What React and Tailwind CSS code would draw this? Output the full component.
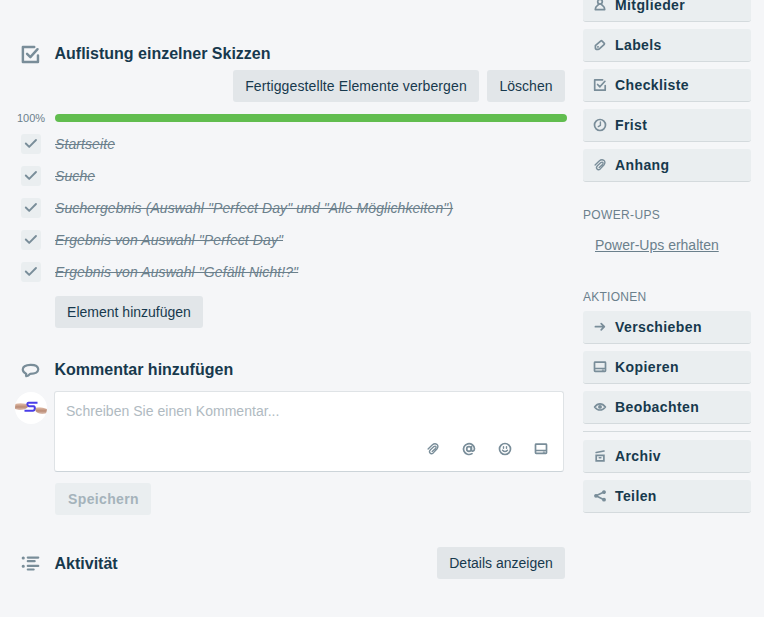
import React from 'react';

function Svg({ size = 16, className = '', children }) {
  return (
    <svg
      width={size}
      height={size}
      viewBox="0 0 16 16"
      fill="none"
      stroke="currentColor"
      strokeWidth="1.7"
      strokeLinecap="round"
      strokeLinejoin="round"
      className={'block shrink-0 text-[#798d99] ' + className}
    >
      {children}
    </svg>
  );
}

const icons = {
  member: (
    <>
      <circle cx="8" cy="4.8" r="2.3" />
      <path d="M6.6 7.2C6.4 8.6 3.3 8.6 3.3 12.6H12.7C12.7 8.6 9.6 8.6 9.4 7.2" />
    </>
  ),
  label: (
    <>
      <path d="M3.6 8.3L8.9 3.8Q9.4 3.4 9.9 3.8L12.3 6.3Q12.7 6.8 12.3 7.3L7.3 11.8Q6.8 12.3 6.1 12.3H4.3Q3.4 12.2 3.4 11.3V9.4Q3.2 8.7 3.6 8.3Z" />
      <circle cx="5.8" cy="9.9" r=".5" strokeWidth="1" />
    </>
  ),
  checklist: (
    <>
      <path d="M10.6 2.8H2.7V13.2H13.2V8.6" />
      <path d="M5.6 7.5L7.9 9.8L12.9 4.3" />
    </>
  ),
  clock: (
    <>
      <circle cx="8" cy="8" r="5.5" />
      <path d="M8.4 4.9V8.4L6.3 9.6" strokeWidth="1.4" />
    </>
  ),
  clip: (
    <path
      d="M3.1 8L7.2 4Q9.6 2 11.8 3.3Q14 5.3 11.9 8L8.3 11.9Q6.4 13.5 5 12.1Q3.7 10.7 5.4 8.8L8.9 5.6Q10.2 4.7 10.9 5.5Q11.5 6.3 10.5 7.4L7.2 10.5"
      strokeWidth="1.35"
    />
  ),
  arrow: <path d="M3.4 7.7H12.3M9.2 4.6L12.3 7.7L9.2 10.8" />,
  card: (
    <>
      <rect x="2.5" y="3.2" width="11" height="9.2" rx=".6" />
      <path d="M2.8 9.5H13.2" strokeWidth="1.3" />
      <path d="M10.4 11.1H11.4" strokeWidth="1.4" />
    </>
  ),
  eye: (
    <>
      <path d="M2.6 7.9Q5 4.8 8 4.8T13.4 7.9Q11 11 8 11T2.6 7.9Z" />
      <circle cx="8" cy="7.9" r="1.1" fill="currentColor" />
    </>
  ),
  archive: (
    <>
      <path d="M4.2 4.5L12 3" />
      <path d="M4.2 7.3V12.9H11.9V7.3Z" strokeLinejoin="miter" />
      <path d="M7.2 9.8H8.9" strokeWidth="1.4" />
    </>
  ),
  share: (
    <>
      <path d="M12 4.1L4 7.8L12 11.7" />
      <circle cx="4" cy="7.8" r="1.3" fill="currentColor" strokeWidth="1.2" />
      <circle cx="12" cy="4.1" r="1.3" fill="currentColor" strokeWidth="1.2" />
      <circle cx="12" cy="11.7" r="1.3" fill="currentColor" strokeWidth="1.2" />
    </>
  ),
  mention: (
    <>
      <circle cx="8" cy="8" r="2.3" />
      <path d="M10.4 5.5V8.8Q10.5 10.3 11.8 10.1Q13.5 9.7 13.5 7.8A5.5 5.4 0 1 0 11 12.6" />
    </>
  ),
  emoji: (
    <>
      <circle cx="8" cy="8" r="5.5" />
      <path d="M6.5 5.6V7.2M9.5 5.6V7.2M5.5 9.2Q8 11.8 10.5 9.2" strokeWidth="1.4" />
    </>
  ),
  comment: (
    <path d="M5 12Q4.6 11.5 5 10.2Q2.6 9.4 2.6 7.2Q2.9 4.2 8 4.1T13.4 7.1Q13.2 10.3 7.7 10.3Q6.6 11.7 5 12Z" strokeWidth="1.5" />
  ),
  activity: (
    <>
      <path d="M6.1 3.9H13.4M6.1 6.4H10.9M6.1 9.7H13.4M6.1 12.2H10.2" strokeWidth="1.5" />
      <path d="M2.9 4.2H3M2.9 9.9H3" strokeWidth="2.1" />
    </>
  ),
};

function SideButton({ icon, children }) {
  return (
    <div className="flex h-[33px] shrink-0 items-center rounded-[3px] border-b border-[#d4dadd] bg-[#eaeef0] pl-[9px] text-[14px] font-bold leading-5 tracking-[0.4px]">
      <Svg>{icons[icon]}</Svg>
      <span className="ml-[7px]">{children}</span>
    </div>
  );
}

function Button({ className = '', children }) {
  return (
    <div className={'flex h-8 shrink-0 items-center justify-center rounded-[3px] bg-[#e2e6e9] ' + className}>
      {children}
    </div>
  );
}

function SectionTitle({ icon, children }) {
  return (
    <div className="flex h-6 items-center">
      <Svg size={23} className="ml-[19px]">{icons[icon]}</Svg>
      <h3 className="ml-[12.5px] text-[16px] font-bold leading-5">{children}</h3>
    </div>
  );
}

const items = [
  'Startseite',
  'Suche',
  'Suchergebnis (Auswahl "Perfect Day" und "Alle Möglichkeiten")',
  'Ergebnis von Auswahl "Perfect Day"',
  'Ergebnis von Auswahl "Gefällt Nicht!?"',
];

function Avatar() {
  return (
    <svg width="32" height="32" viewBox="0 0 32 32" className="ml-[15px] mt-px block shrink-0">
      <defs>
        <clipPath id="round"><circle cx="16" cy="16" r="16" /></clipPath>
        <linearGradient id="skin" x1="0" y1="0" x2="0" y2="1">
          <stop offset="0" stopColor="#e5c2ad" />
          <stop offset=".55" stopColor="#b98a74" />
          <stop offset="1" stopColor="#e0c5b8" />
        </linearGradient>
      </defs>
      <g clipPath="url(#round)">
        <rect width="32" height="32" fill="#fff" />
        <path d="M0 12Q5 10.5 12 12L13 15Q10 18.5 4 18L0 17Z" fill="url(#skin)" />
        <path d="M20 16Q25 14 32 17V21Q27 23 23 21Q20 20 20 16Z" fill="url(#skin)" />
        <path d="M22.5 10.8H13.5Q12.2 10.8 12.4 12.4T14 14.3H18.5Q20 14.5 19.8 16.5T18 18.8H9.5" fill="none" stroke="#493de9" strokeWidth="2" />
      </g>
    </svg>
  );
}

export default function App() {
  return (
    <div className="flex h-[617px] w-[764px] overflow-hidden bg-[#f5f6f8] font-['Liberation_Sans',Arial,sans-serif] text-[14px] leading-5 text-[#17394d]">
      <main className="flex w-[583px] shrink-0 flex-col pt-[42px]">
        <SectionTitle icon="checklist">Auflistung einzelner Skizzen</SectionTitle>
        <div className="mt-1 flex justify-end gap-2 pr-[18px]">
          <Button className="w-[246px] tracking-[0.11px]">Fertiggestellte Elemente verbergen</Button>
          <Button className="w-[78px]">Löschen</Button>
        </div>
        <div className="mt-3 flex h-2 items-center">
          <span className="w-[55px] pl-[17px] text-[11px] leading-3 text-[#6b808c]">100%</span>
          <div className="h-2 w-[512px] rounded-full bg-[#61bd4f]" />
        </div>
        <ul className="mt-3 flex flex-col gap-3">
          {items.map((t) => (
            <li key={t} className="flex h-5 items-center">
              <span className="ml-[21px] flex size-5 items-center justify-center rounded-[3px] bg-[#eaeef0]">
                <Svg className="-mt-0.5">
                  <path d="M2.8 8.5L6.2 11.9L13 5" strokeWidth="1.9" />
                </Svg>
              </span>
              <span className="ml-[14px] italic tracking-[0.09px] text-[#6b808c] line-through">{t}</span>
            </li>
          ))}
        </ul>
        <Button className="ml-[55px] mt-[14px] w-[148px]">Element hinzufügen</Button>
        <div className="mt-[30px]">
          <SectionTitle icon="comment">Kommentar hinzufügen</SectionTitle>
        </div>
        <div className="mt-[9px] flex">
          <Avatar />
          <div className="ml-[7px] flex h-[81px] w-[510px] flex-col justify-between rounded-[3px] border border-[#dfe3e6] border-b-[#ccd4d9] bg-white">
            <p className="pl-[11px] pt-[9px] tracking-[0.03px] text-[#b0bac1]">Schreiben Sie einen Kommentar...</p>
            <div className="mb-[14px] flex justify-end gap-5 pr-[14.5px]">
              <Svg>{icons.clip}</Svg>
              <Svg>{icons.mention}</Svg>
              <Svg>{icons.emoji}</Svg>
              <Svg>{icons.card}</Svg>
            </div>
          </div>
        </div>
        <div className="ml-[55px] mt-[11px] flex h-8 w-24 items-center justify-center rounded-[3px] bg-[#eaeef0] pl-px font-bold tracking-[0.35px] text-[#a5b3bb]">
          Speichern
        </div>
        <div className="mt-8 flex items-center justify-between pr-[18px]">
          <div className="pt-px">
            <SectionTitle icon="activity">Aktivität</SectionTitle>
          </div>
          <Button className="w-32">Details anzeigen</Button>
        </div>
      </main>
      <aside className="-mt-[11px] flex w-[168px] shrink-0 flex-col">
        <div className="flex flex-col gap-[7px]">
          <SideButton icon="member">Mitglieder</SideButton>
          <SideButton icon="label">Labels</SideButton>
          <SideButton icon="checklist">Checkliste</SideButton>
          <SideButton icon="clock">Frist</SideButton>
          <SideButton icon="clip">Anhang</SideButton>
        </div>
        <h4 className="mt-[23px] text-[12px] tracking-[0.35px] text-[#6b808c]">POWER-UPS</h4>
        <div className="mt-2.5 pl-3 text-[#6b808c] underline">Power-Ups erhalten</div>
        <h4 className="mt-8 text-[12px] tracking-[0.25px] text-[#6b808c]">AKTIONEN</h4>
        <div className="mt-1 flex flex-col gap-[7px]">
          <SideButton icon="arrow">Verschieben</SideButton>
          <SideButton icon="card">Kopieren</SideButton>
          <SideButton icon="eye">Beobachten</SideButton>
        </div>
        <div className="mt-[7px] h-px bg-[#d4dadd]" />
        <div className="mt-2 flex flex-col gap-[7px]">
          <SideButton icon="archive">Archiv</SideButton>
          <SideButton icon="share">Teilen</SideButton>
        </div>
      </aside>
    </div>
  );
}
